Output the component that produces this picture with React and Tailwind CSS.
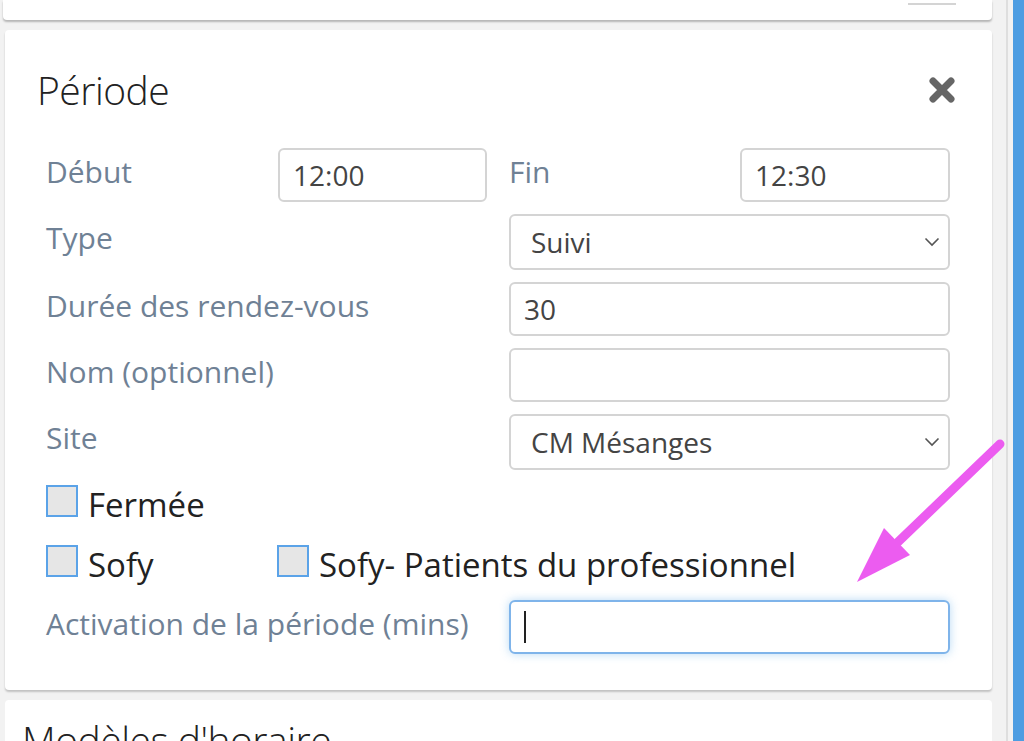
export default function App() {
  const font = { fontFamily: '"Open Sans", "Noto Sans", sans-serif' };

  return (
    <div className="relative flex h-[741px] w-[1024px] overflow-hidden bg-[#f2f2f2]" style={font}>
      {/* MAIN COLUMN */}
      <div className="flex w-[1006px] shrink-0 flex-col">
        {/* card above, mostly scrolled out */}
        <div className="ml-[3px] flex h-[20px] w-[989px] shrink-0 items-start justify-end rounded-b bg-white pr-[36px] shadow-[0_2px_2px_rgba(0,0,0,0.25)]">
          <div className="mt-[3px] h-[2px] w-[48px] bg-[#d4d4d4]" />
        </div>

        {/* PERIODE CARD */}
        <div className="ml-[5px] mt-[10px] w-[987px] shrink-0 rounded bg-white pb-[36px] pl-[41px] pr-[42px] shadow-[0_2px_2px_rgba(0,0,0,0.2)]">
          <div className="-ml-[9px] flex items-center justify-between pt-[34px] pb-[32px]">
            <h2 className="text-[39px] font-light leading-[52px] tracking-[-0.5px] text-[#222]">
              Période
            </h2>
            <svg width="28" height="28" viewBox="0 0 28 28" className="mr-[-6px]">
              <path d="M5 5 L23 23 M23 5 L5 23" stroke="#666" strokeWidth="7" strokeLinecap="round" />
            </svg>
          </div>

          <div className="flex flex-col gap-[12px]">
            {/* Debut / Fin */}
            <div className="grid grid-cols-2 gap-x-[22px]">
              <div className="grid grid-cols-[232px_1fr]">
                <Label>Début</Label>
                <TextInput value="12:00" />
              </div>
              <div className="grid grid-cols-[231px_1fr]">
                <Label>Fin</Label>
                <TextInput value="12:30" />
              </div>
            </div>

            <Row label="Type"><Select value="Suivi" /></Row>
            <Row label="Durée des rendez-vous"><TextInput value="30" /></Row>
            <Row label="Nom (optionnel)"><TextInput value="" /></Row>
            <Row label="Site"><Select value="CM Mésanges" /></Row>
          </div>

          <div className="mt-[15px] flex flex-col gap-[20px]">
            <div className="flex">
              <Check label="Fermée" />
            </div>
            <div className="flex">
              <div className="w-[231px]"><Check label="Sofy" /></div>
              <Check label="Sofy- Patients du professionnel" />
            </div>
          </div>

          <div className="mt-[15px] grid grid-cols-2 gap-x-[22px]">
            <Label>Activation de la période (mins)</Label>
            <div className="flex h-[54px] items-center rounded-[6px] border-2 border-[#7fb4ea] bg-white pl-[13px] shadow-[0_0_10px_rgba(102,175,233,0.45)]">
              <div className="h-[32px] w-[2px] bg-[#222]" />
            </div>
          </div>
        </div>

        {/* NEXT CARD */}
        <div className="ml-[5px] mt-[10px] h-[60px] w-[987px] shrink-0 rounded-t bg-white pl-[17px] pt-[14px]">
          <h2 className="whitespace-nowrap text-[39px] font-light leading-[52px] tracking-[-0.5px] text-[#222]">
            Modèles d'horaire
          </h2>
        </div>
      </div>

      {/* right rail */}
      <div className="h-full w-[2px] shrink-0 bg-[#dedede]" />
      <div className="w-[5px] shrink-0 bg-[#f2f2f2]" />
      <div className="w-[11px] shrink-0 bg-[#4d9de2]" />

      {/* annotation arrow */}
      <svg className="pointer-events-none absolute left-[840px] top-[430px]" width="180" height="170" viewBox="0 0 180 170">
        <line x1="160" y1="14" x2="58" y2="112" stroke="#ec5cf0" strokeWidth="9" strokeLinecap="round" />
        <polygon points="17,152 44,98 70,125" fill="#ec5cf0" />
      </svg>
    </div>
  );
}

function Label({ children }) {
  return (
    <div className="whitespace-nowrap pt-[4px] text-[30px] leading-[40px] text-[#6f8195]">{children}</div>
  );
}

function Row({ label, children }) {
  return (
    <div className="grid grid-cols-2 gap-x-[22px]">
      <Label>{label}</Label>
      {children}
    </div>
  );
}

function TextInput({ value }) {
  return (
    <div className="flex h-[54px] items-center rounded-[6px] border-2 border-[#d4d4d4] bg-white px-[13px] text-[28px] text-[#444]">
      {value}
    </div>
  );
}

function Select({ value }) {
  return (
    <div className="flex h-[56px] items-center justify-between rounded-[6px] border-2 border-[#d4d4d4] bg-white pl-[20px] pr-[8px] text-[28px] text-[#444]">
      <span>{value}</span>
      <svg width="16" height="10" viewBox="0 0 16 10">
        <path d="M1.5 1.5 L8 8 L14.5 1.5" fill="none" stroke="#555" strokeWidth="1.6" />
      </svg>
    </div>
  );
}

function Check({ label }) {
  return (
    <div className="flex items-start gap-[10px]">
      <div className="h-[32px] w-[32px] shrink-0 border-2 border-[#5ba3e8] bg-[#e6e6e6]" />
      <span className="whitespace-nowrap text-[33px] leading-[40px] text-[#222]">{label}</span>
    </div>
  );
}
